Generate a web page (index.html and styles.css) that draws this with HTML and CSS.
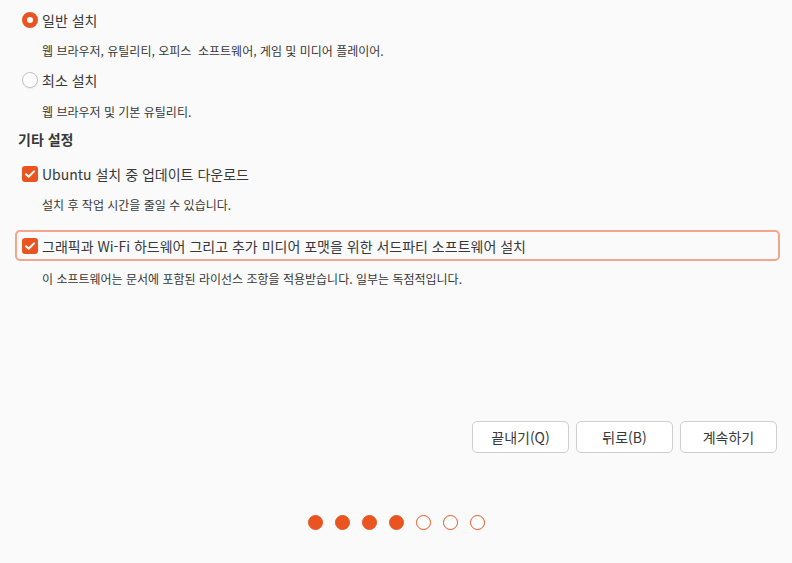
FILE: index.html
```html
<!doctype html>
<html lang="ko">
  <head>
    <meta charset="UTF-8" />
    <meta name="viewport" content="width=device-width, initial-scale=1" />
    <title>업데이트 및 기타 소프트웨어</title>
    <link rel="stylesheet" href="styles.css">
  </head>
  <body>
    <div class="page">
      <div class="options">
        <label class="choice">
          <span class="radio checked"></span>
          <span class="label">일반 설치</span>
        </label>
        <p class="desc">웹 브라우저, 유틸리티, 오피스&nbsp; 소프트웨어, 게임 및 미디어 플레이어.</p>

        <label class="choice">
          <span class="radio"></span>
          <span class="label">최소 설치</span>
        </label>
        <p class="desc desc-minimal">웹 브라우저 및 기본 유틸리티.</p>

        <h2 class="heading">기타 설정</h2>

        <label class="choice check-row">
          <span class="check">
            <svg viewBox="0 0 16 16" width="16" height="16"><path d="M4 8.2l2.7 2.6L12 5.4" fill="none" stroke="#fff" stroke-width="2" stroke-linecap="round" stroke-linejoin="round"/></svg>
          </span>
          <span class="label">Ubuntu 설치 중 업데이트 다운로드</span>
        </label>
        <p class="desc desc-updates">설치 후 작업 시간을 줄일 수 있습니다.</p>

        <label class="choice focused">
          <span class="check">
            <svg viewBox="0 0 16 16" width="16" height="16"><path d="M4 8.2l2.7 2.6L12 5.4" fill="none" stroke="#fff" stroke-width="2" stroke-linecap="round" stroke-linejoin="round"/></svg>
          </span>
          <span class="label">그래픽과 Wi-Fi 하드웨어 그리고 추가 미디어 포맷을 위한 서드파티 소프트웨어 설치</span>
        </label>
        <p class="desc desc-last">이 소프트웨어는 문서에 포함된 라이선스 조항을 적용받습니다. 일부는 독점적입니다.</p>
      </div>

      <div class="buttons">
        <button type="button">끝내기(Q)</button>
        <button type="button">뒤로(B)</button>
        <button type="button">계속하기</button>
      </div>

      <div class="steps">
        <span class="dot done"></span>
        <span class="dot done"></span>
        <span class="dot done"></span>
        <span class="dot done"></span>
        <span class="dot"></span>
        <span class="dot"></span>
        <span class="dot"></span>
      </div>
    </div>
  </body>
</html>
```

FILE: styles.css
```css
body {
  margin: 0;
  background: #fafafa;
  color: #383838;
  font-family: "Noto Sans CJK KR", "Noto Sans", sans-serif;
}
.page {
  padding: 10px 15px 0 17px;
}
.choice {
  display: flex;
  align-items: center;
  height: 20px;
  padding-left: 5px;
  font-size: 14px;
}
.choice .label {
  margin-left: 4px;
  line-height: 20px;
}
.radio {
  width: 16px;
  height: 16px;
  box-sizing: border-box;
  border-radius: 50%;
  background: #fff;
  border: 1px solid #c4c4c4;
  box-shadow: 0 1px 1px rgba(0, 0, 0, 0.06);
}
.radio.checked {
  border: 5px solid #e95420;
  box-shadow: none;
}
.check {
  width: 16px;
  height: 16px;
  border-radius: 3px;
  background: #e95420;
  display: flex;
}
.desc {
  margin: 11px 0 9px 25px;
  font-size: 12px;
  line-height: 20px;
}
.desc-minimal {
  margin-top: 12px;
  margin-bottom: 0;
}
.heading {
  margin: 7px 0 0 1px;
  font-size: 14px;
  font-weight: bold;
  line-height: 20px;
}
.check-row {
  margin-top: 15px;
}
.desc-updates {
  margin-top: 11px;
  margin-bottom: 15px;
}
.focused {
  height: 27px;
  margin: 0 -3px 0 -2px;
  padding-left: 5px;
  border: 2px solid #f3a68b;
  border-radius: 5px;
}
.desc-last {
  margin-top: 8px;
  margin-bottom: 0;
}
.buttons {
  display: flex;
  justify-content: flex-end;
  gap: 7px;
  margin-top: 132px;
}
.buttons button {
  width: 97px;
  height: 32px;
  background: #fff;
  border: 1px solid #cfcfcf;
  border-radius: 5px;
  color: #383838;
  font-family: inherit;
  font-size: 14px;
  padding: 0;
}
.steps {
  display: flex;
  justify-content: center;
  gap: 12px;
  margin: 62px 0 0 -2px;
}
.dot {
  width: 15px;
  height: 15px;
  box-sizing: border-box;
  border-radius: 50%;
  background: #fff;
  border: 1.5px solid #e95420;
}
.dot.done {
  background: #e95420;
}
```
